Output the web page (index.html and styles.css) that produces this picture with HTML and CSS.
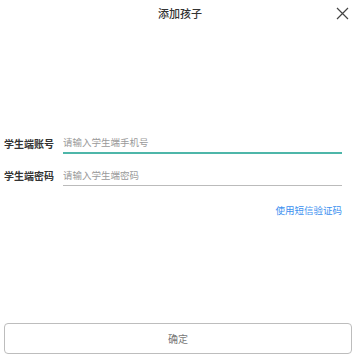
FILE: index.html
```html
<!DOCTYPE html>
<html lang="zh">
  <head>
    <meta charset="UTF-8" />
    <meta name="viewport" content="width=device-width, initial-scale=1.0" />
    <title>添加孩子</title>
    <link rel="stylesheet" href="styles.css">
  </head>

  <body>
    <div class="page">
      <div class="header">
        <span></span>
        <div class="title">添加孩子</div>
        <button class="close">
          <svg width="13" height="13" viewBox="0 0 13 13">
            <path d="M1 1 L12 12 M12 1 L1 12" stroke="#444" stroke-width="1.2" fill="none" />
          </svg>
        </button>
      </div>

      <div class="form">
        <div class="row">
          <label>学生端账号</label>
          <input class="field active" type="text" placeholder="请输入学生端手机号" />
        </div>
        <div class="row">
          <label>学生端密码</label>
          <input class="field" type="password" placeholder="请输入学生端密码" />
        </div>
        <div class="more">
          <a href="#" class="sms">使用短信验证码</a>
        </div>
      </div>

      <button class="submit">确定</button>
    </div>
  </body>
</html>
```

FILE: styles.css
```css
* {
  margin: 0;
  padding: 0;
  box-sizing: border-box;
  font-family: "Noto Sans CJK SC", "Noto Sans", sans-serif;
  text-decoration: none;
}

body {
  background: #fff;
}

.page {
  height: 360px;
  display: flex;
  flex-direction: column;
}

.header {
  height: 26px;
  display: grid;
  grid-template-columns: 1fr auto 1fr;
  align-items: center;
}

.header .title {
  font-size: 11px;
  font-weight: 500;
  color: #333;
}

.header .close {
  justify-self: end;
  margin-right: 11px;
  width: 14px;
  height: 14px;
  border: none;
  background: none;
  display: flex;
  align-items: center;
  justify-content: center;
}

.form {
  padding: 101px 18px 0 4px;
}

.row {
  display: flex;
  align-items: center;
  height: 32px;
}

.row label {
  width: 59px;
  flex-shrink: 0;
  font-size: 10px;
  font-weight: bold;
  color: #333;
}

.row .field {
  flex: 1;
  height: 22px;
  border: none;
  border-bottom: 1.5px solid #bbb;
  outline: none;
  font-size: 9.5px;
  color: #333;
  background: none;
}

.row .field.active {
  border-bottom: 2px solid #4db6a9;
}

.row .field::placeholder {
  color: #9a9a9a;
}

.more {
  display: flex;
  justify-content: flex-end;
  padding-top: 12px;
}

.sms {
  font-size: 9.5px;
  color: #3b8ff0;
}

.submit {
  margin: auto 8px 6px 4px;
  height: 31px;
  border: 1px solid #bdbdbd;
  border-radius: 4px;
  background: #fff;
  font-size: 10px;
  color: #777;
}
```
